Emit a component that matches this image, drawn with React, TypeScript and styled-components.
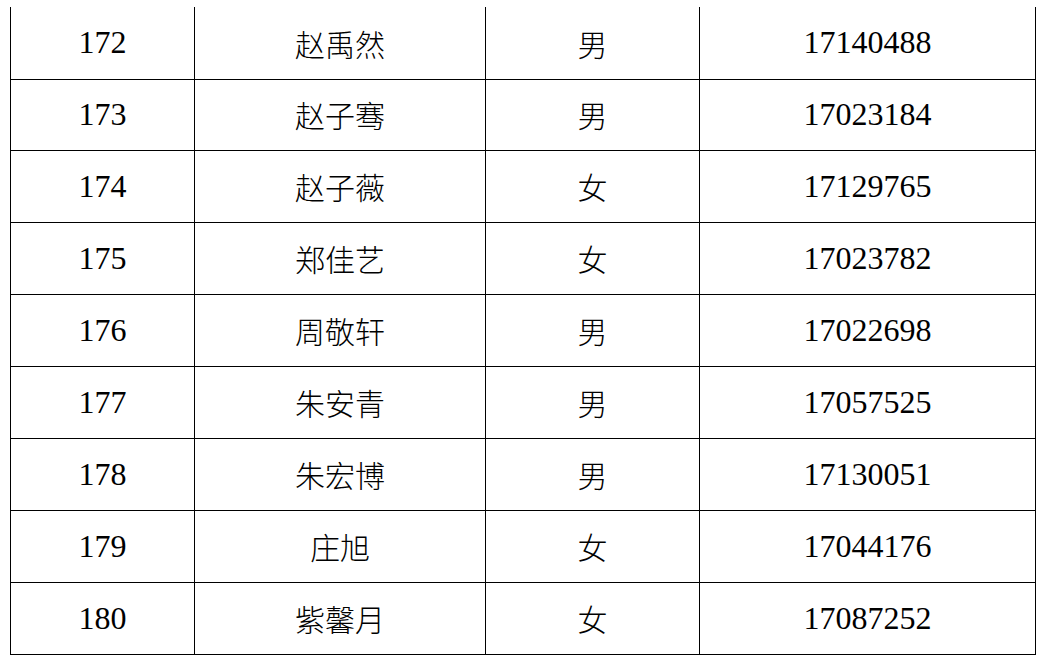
import { createGlobalStyle, styled } from 'styled-components';

const GlobalStyle = createGlobalStyle`
  html, body {
    margin: 0;
    padding: 0;
    background: #ffffff;
  }
`;

const Page = styled.div`
  padding: 7px 0 0 10px;
`;

const Grid = styled.div`
  display: grid;
  grid-template-columns: 184px 291px 214px 336px;
  grid-auto-rows: 72px;
  width: max-content;
  border-left: 1px solid #000;
  color: #000;

  & > div:nth-child(-n + 4) {
    height: 73px;
  }
`;

const Cell = styled.div<{ $cjk?: boolean }>`
  box-sizing: border-box;
  display: flex;
  align-items: center;
  justify-content: center;
  border-right: 1px solid #000;
  border-bottom: 1px solid #000;
  font-family: ${(p) =>
    p.$cjk ? "'Noto Sans CJK SC', sans-serif" : "'Liberation Serif', 'Noto Sans CJK SC', serif"};
  font-weight: ${(p) => (p.$cjk ? 300 : 400)};
  font-size: ${(p) => (p.$cjk ? '30px' : '32px')};
  padding-bottom: 1px;
`;

const rows = [
  ['172', '赵禹然', '男', '17140488'],
  ['173', '赵子骞', '男', '17023184'],
  ['174', '赵子薇', '女', '17129765'],
  ['175', '郑佳艺', '女', '17023782'],
  ['176', '周敬轩', '男', '17022698'],
  ['177', '朱安青', '男', '17057525'],
  ['178', '朱宏博', '男', '17130051'],
  ['179', '庄旭', '女', '17044176'],
  ['180', '紫馨月', '女', '17087252'],
];

export default function App() {
  return (
    <Page>
      <GlobalStyle />
      <Grid>
        {rows.map((r) => [
          <Cell key={r[0] + 'a'}>{r[0]}</Cell>,
          <Cell key={r[0] + 'b'} $cjk>{r[1]}</Cell>,
          <Cell key={r[0] + 'c'} $cjk>{r[2]}</Cell>,
          <Cell key={r[0] + 'd'}>{r[3]}</Cell>,
        ])}
      </Grid>
    </Page>
  );
}
